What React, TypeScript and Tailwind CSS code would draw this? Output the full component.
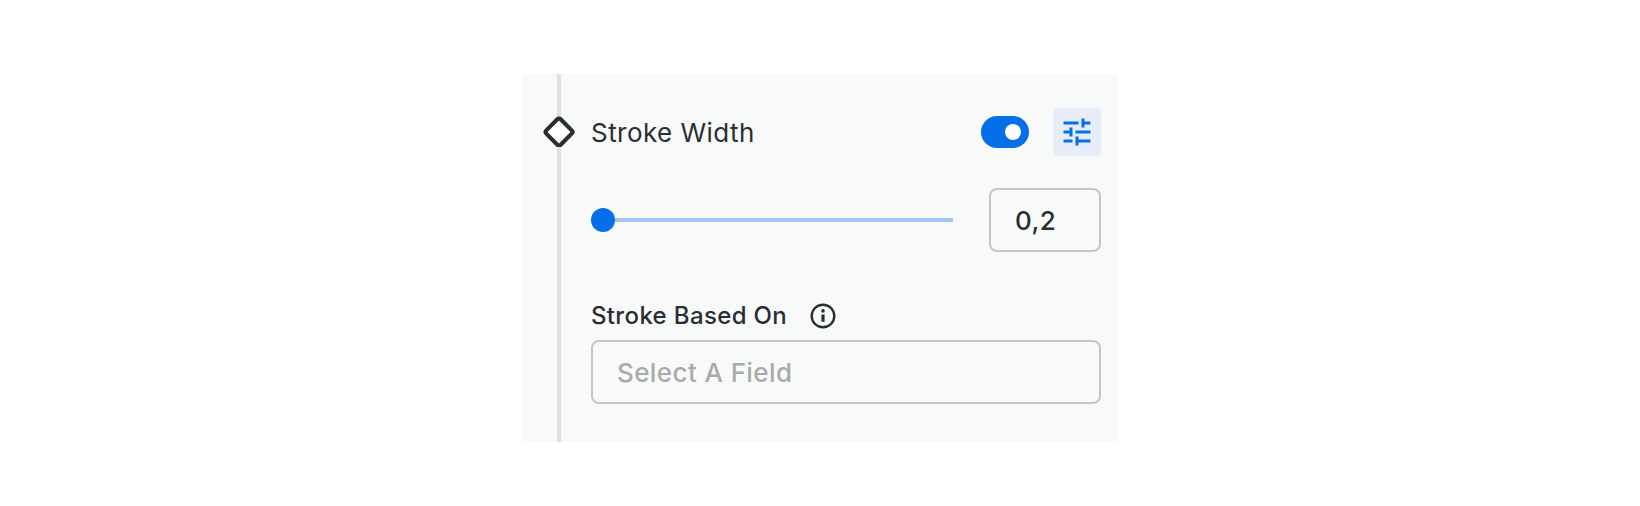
import { useState } from "react";

function TuneIcon() {
  return (
    <svg viewBox="0 0 24 24" className="size-9" fill="#046fe6" aria-hidden="true">
      <path d="M3 17v2h6v-2H3zM3 5v2h10V5H3zm10 16v-2h8v-2h-8v-2h-2v6h2zM7 9v2H3v2h4v2h2V9H7zm14 4v-2H11v2h10zm-6-4h2V7h4V5h-4V3h-2v6z" />
    </svg>
  );
}

function InfoIcon() {
  return (
    <svg viewBox="0 0 26 26" className="size-[26px]" fill="none" stroke="#2a2e33" aria-hidden="true">
      <circle cx="13" cy="13" r="11.3" strokeWidth="2.4" />
      <circle cx="13" cy="7.9" r="1.8" fill="#2a2e33" stroke="none" />
      <path d="M13 11.5v7.3" strokeWidth="3.2" />
    </svg>
  );
}

function TimelineRail() {
  return (
    <div className="flex w-[68px] shrink-0 flex-col items-center">
      <div className="ml-1 h-[43px] w-1 bg-[#dfe1e0]" />
      <svg viewBox="0 0 32 30" className="ml-1 h-[30px] w-8 shrink-0 overflow-visible" aria-hidden="true">
        <rect x="5.85" y="4.85" width="20.3" height="20.3" rx="2" transform="rotate(45 16 15)" fill="#fff" stroke="#2a2e33" strokeWidth="4.1" />
      </svg>
      <div className="ml-1 w-1 flex-1 bg-[#dfe1e0]" />
    </div>
  );
}

export default function App() {
  const [enabled, setEnabled] = useState(true);

  return (
    <main className="flex h-[506px] w-[1640px] justify-center bg-white pt-[74px] font-['Inter',sans-serif] text-[#2a2e33]">
      <section className="flex h-[368px] w-[594px] bg-[#f8faf9]">
        <TimelineRail />
        <div className="flex w-[510px] flex-col pt-[34px]">
          <div className="flex h-12 items-center">
            <h2 className="pt-0.5 text-[26px] leading-8 tracking-[0.45px]">Stroke Width</h2>
            <button
              type="button"
              role="switch"
              aria-checked={enabled}
              aria-label="Stroke Width"
              onClick={() => setEnabled(!enabled)}
              className={`ml-auto flex h-8 w-12 items-center rounded-full px-2 ${enabled ? "justify-end bg-[#046fe6]" : "justify-start bg-[#c4c6c5]"}`}
            >
              <span className="size-4 rounded-full bg-white" />
            </button>
            <button type="button" aria-label="Options" className="ml-6 flex size-12 items-center justify-center rounded bg-[#e6edf8]">
              <TuneIcon />
            </button>
          </div>

          <div className="mt-8 flex h-16 items-center">
            <div className="flex w-[362px] items-center">
              <span className="size-6 rounded-full bg-[#046fe6]" />
              <span className="h-1 flex-1 bg-[#a4c4f1]" />
            </div>
            <div className="ml-9 flex h-16 w-28 items-center rounded-lg border-2 border-[#c4c6c5] px-6 text-[26px] font-medium tracking-[0.4px]">
              0,2
            </div>
          </div>

          <div className="mt-12 flex h-8 items-center">
            <span className="text-[24px] leading-8 font-medium tracking-[0.35px]">Stroke Based On</span>
            <span className="mr-[265px] ml-auto">
              <InfoIcon />
            </span>
          </div>
          <div className="mt-2 flex h-16 items-center rounded-lg border-2 border-[#c4c6c5] px-6 text-[26px] font-medium tracking-[0.4px] text-[#a9abab]">
            Select A Field
          </div>
        </div>
      </section>
    </main>
  );
}
